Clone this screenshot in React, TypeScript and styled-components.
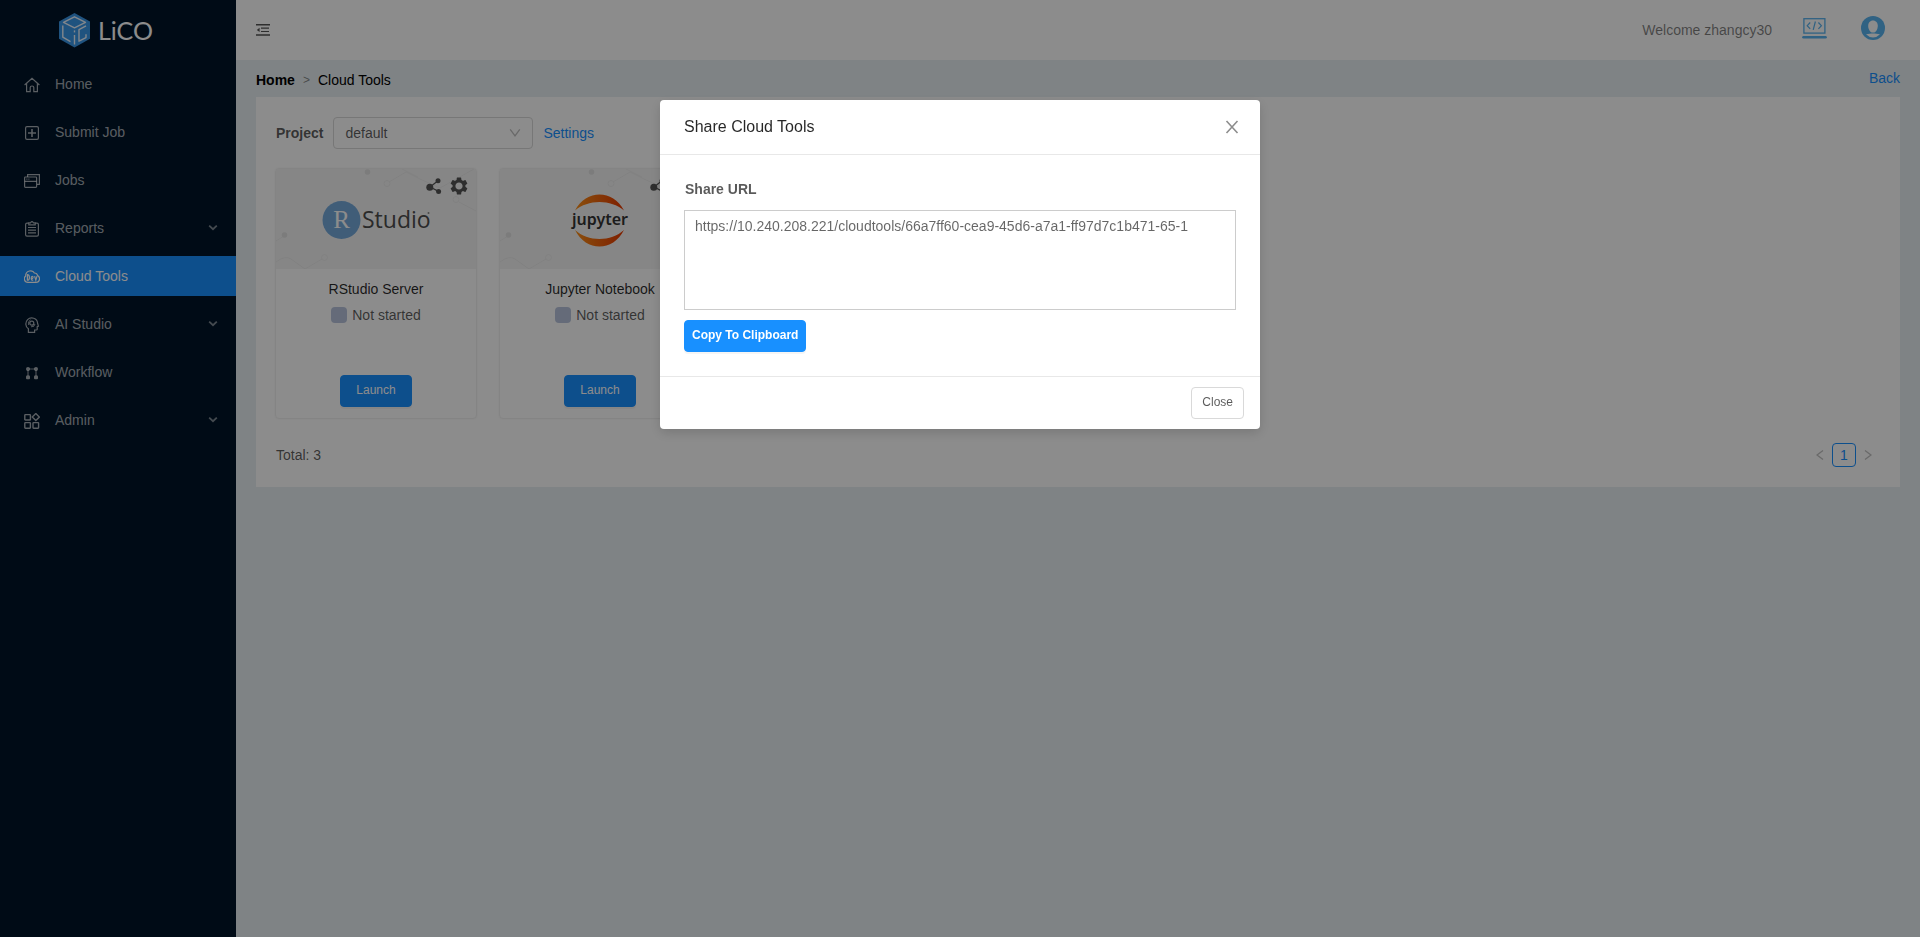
import React from 'react';
import styled, { createGlobalStyle, css } from 'styled-components';

const GlobalStyle = createGlobalStyle`
  * { box-sizing: border-box; }
  html, body { margin: 0; padding: 0; }
  body {
    font-family: Arial, "Liberation Sans", sans-serif;
    font-size: 14px;
    line-height: 22px;
    color: rgba(0, 0, 0, 0.65);
    background: #e7eef2;
  }
  button, input, select, textarea { font-family: inherit; }
  a { color: #1890ff; text-decoration: none; }
`;

const Layout = styled.div`
  display: flex;
  min-height: 100vh;
`;

const Sidebar = styled.aside`
  flex: 0 0 236px;
  background: #001529;
`;

const Brand = styled.a`
  display: flex;
  align-items: center;
  height: 60px;
  padding-left: 58px;
`;

const Menu = styled.nav`
  display: flex;
  flex-direction: column;
  gap: 8px;
  padding: 4px 0;
`;

const MenuItem = styled.a<{ $active?: boolean }>`
  display: flex;
  align-items: center;
  height: 40px;
  padding: 0 18px 0 24px;
  color: ${(p) => (p.$active ? '#fff' : 'rgba(255, 255, 255, 0.65)')};
  background: ${(p) => (p.$active ? '#1890ff' : 'transparent')};
  svg { flex: none; display: block; }
`;

const MenuIcon = styled.span`
  padding-top: 2px;
`;

const MenuLabel = styled.span`
  flex: 1;
  padding-left: 15px;
`;

const Main = styled.div`
  flex: 1;
  min-width: 0;
  display: flex;
  flex-direction: column;
`;

const Header = styled.header`
  display: flex;
  align-items: center;
  justify-content: space-between;
  height: 60px;
  padding: 0 35px 0 20px;
  background: #fff;
`;

const IconButton = styled.button`
  display: flex;
  align-items: center;
  justify-content: center;
  padding: 0;
  border: 0;
  background: none;
  color: inherit;
  cursor: pointer;
`;

const HeaderTools = styled.div`
  display: flex;
  align-items: center;
`;

const Welcome = styled.span`
  color: rgba(0, 0, 0, 0.5);
  margin-right: 30px;
`;

const HeaderIcons = styled.div`
  display: flex;
  gap: 34px;
  padding-bottom: 4px;
`;

const Content = styled.main`
  padding: 0 20px;
`;

const CrumbBar = styled.div`
  display: flex;
  justify-content: space-between;
  height: 37px;
  padding-top: 9px;
`;

const Crumbs = styled.div`
  display: flex;
  gap: 8px;
  color: #000;
  strong { font-weight: 700; }
  span { color: rgba(0, 0, 0, 0.45); font-size: 12px; }
`;

const Back = styled.a`
  line-height: 18px;
`;

const Panel = styled.section`
  background: #fff;
  padding: 20px;
`;

const Toolbar = styled.div`
  display: flex;
  align-items: center;
  gap: 10px;
  height: 32px;
  label { font-weight: 700; }
`;

const SelectWrap = styled.div`
  position: relative;
  width: 200px;
  svg {
    position: absolute;
    right: 12px;
    top: 10px;
    pointer-events: none;
    color: rgba(0, 0, 0, 0.25);
  }
`;

const Select = styled.select`
  appearance: none;
  display: block;
  width: 100%;
  height: 32px;
  padding: 0 11px;
  border: 1px solid #d9d9d9;
  border-radius: 4px;
  background: #fff;
  color: rgba(0, 0, 0, 0.65);
  font-size: 14px;
`;

const Cards = styled.div`
  display: flex;
  flex-wrap: wrap;
  gap: 22px;
  margin: 19px 0 24px -1px;
`;

const Card = styled.article`
  width: 202px;
  height: 251px;
  display: flex;
  flex-direction: column;
  align-items: center;
  border: 1px solid #f0f0f0;
  border-radius: 4px;
  box-shadow: 0 0 2px rgba(0, 0, 0, 0.06);
  overflow: hidden;
`;

const Cover = styled.div`
  position: relative;
  width: 100%;
  height: 100px;
  background: #f5f5f5;
  > svg { display: block; }
`;

const CoverActions = styled.div`
  position: absolute;
  top: 8px;
  right: 8px;
  display: flex;
  gap: 8px;
  color: #555;
`;

const CardTitle = styled.h3`
  margin: 9px 0 4px;
  font-size: 14px;
  font-weight: 400;
  color: rgba(0, 0, 0, 0.85);
`;

const Status = styled.div`
  display: flex;
  align-items: center;
  gap: 5px;
  i {
    width: 16px;
    height: 16px;
    border-radius: 4px;
    background: #b8c4dc;
  }
`;

const Button = styled.button<{ $primary?: boolean; $bold?: boolean; $pad: number }>`
  height: 32px;
  padding: 0 ${(p) => p.$pad}px 2px;
  border: 1px solid #d9d9d9;
  border-radius: 4px;
  background: #fff;
  color: rgba(0, 0, 0, 0.65);
  font-size: 12px;
  font-weight: ${(p) => (p.$bold ? 700 : 400)};
  cursor: pointer;
  ${(p) => p.$primary && css`
    border-color: #1890ff;
    background: #1890ff;
    color: #fff;
    box-shadow: 0 2px 0 rgba(0, 0, 0, 0.04);
  `}
`;

const CardFooter = styled.div`
  margin-top: auto;
  padding-bottom: 11px;
`;

const PanelFooter = styled.div`
  display: flex;
  justify-content: space-between;
  align-items: center;
  height: 24px;
`;

const Pager = styled.nav`
  display: flex;
  align-items: center;
  color: rgba(0, 0, 0, 0.25);
`;

const PageArrow = styled(IconButton)`
  width: 24px;
  height: 24px;
`;

const PageNumber = styled.button`
  width: 24px;
  height: 24px;
  padding: 0;
  border: 1px solid #1890ff;
  border-radius: 4px;
  background: #fff;
  color: #1890ff;
  font-size: 14px;
`;

const Mask = styled.div`
  position: fixed;
  inset: 0;
  display: flex;
  justify-content: center;
  align-items: flex-start;
  padding-top: 100px;
  background: rgba(0, 0, 0, 0.45);
`;

const Dialog = styled.div`
  width: 600px;
  border-radius: 4px;
  background: #fff;
  box-shadow: 0 4px 12px rgba(0, 0, 0, 0.15);
`;

const DialogHeader = styled.div`
  display: flex;
  align-items: center;
  justify-content: space-between;
  height: 55px;
  padding: 0 21px 0 24px;
  border-bottom: 1px solid #e8e8e8;
  color: rgba(0, 0, 0, 0.45);
  h2 {
    margin: 0;
    font-size: 16px;
    font-weight: 400;
    color: rgba(0, 0, 0, 0.85);
  }
`;

const DialogBody = styled.div`
  display: flex;
  flex-direction: column;
  align-items: flex-start;
  padding: 23px 24px 24px;
  label {
    font-weight: 700;
    padding-left: 1px;
    margin-bottom: 10px;
  }
`;

const UrlBox = styled.textarea`
  display: block;
  width: 100%;
  height: 100px;
  margin-bottom: 10px;
  padding: 4px 10px;
  border: 1px solid #ccc;
  border-radius: 0;
  resize: none;
  color: rgba(0, 0, 0, 0.6);
  font-size: 14px;
  line-height: 22px;
`;

const DialogFooter = styled.div`
  display: flex;
  justify-content: flex-end;
  padding: 10px 16px;
  border-top: 1px solid #e8e8e8;
`;

const stroke = { fill: 'none', stroke: 'currentColor', strokeWidth: 1.2 } as const;

const HomeIcon = () => (
  <svg width="16" height="16" viewBox="0 0 16 16" {...stroke}>
    <path d="M.6 8 8 1.4 15.4 8M2.600 6.600v8h3.600V10.400q0-1.400 1.800-1.400t1.800 1.400v4.200h3.600v-8" />
  </svg>
);
const SubmitIcon = () => (
  <svg width="16" height="16" viewBox="0 0 16 16" {...stroke}>
    <rect x="1.600" y="1.600" width="12.800" height="12.800" rx="1.400" />
    <path d="M8 4v8M4 8h8" strokeWidth="1.600" />
  </svg>
);
const JobsIcon = () => (
  <svg width="16" height="16" viewBox="0 0 16 16" {...stroke}>
    <path d="M3.600 4V1.600h11.800v9.800H13" />
    <rect x=".6" y="4" width="12" height="10.400" rx=".8" />
    <path d="M.6 8.400h12M2.400 6.200h1M4.400 6.200h1" />
  </svg>
);
const ReportsIcon = () => (
  <svg width="16" height="16" viewBox="0 0 16 16" {...stroke}>
    <path d="M4.600 2.200H3q-1.400 0-1.400 1.400v10.200q0 1.400 1.400 1.400h10q1.400 0 1.400-1.400V3.600q0-1.400-1.400-1.400h-1.600" />
    <path d="M4.800 3.800V1.800H6.600Q8-.4 9.400 1.800h1.800v2zM4 6.500h8M4 9.200h8M4 11.900h8" />
  </svg>
);
const CloudIcon = () => (
  <svg width="16" height="16" viewBox="0 0 16 16" {...stroke}>
    <path d="M4 13.400C-.4 13.400-.2 8 1.600 7.200 1.600 1 8.800.6 10.400 4c2.600 0 3 1.600 3.200 2.600 3 1.400 2.400 6.800-1.600 6.800z" />
    <path d="M3.400 5.600v5.600q2 0 2-2.800t-2-2.800zM9.200 8.800q0-1.400-1-1.400t-1 1.900 1 1.900h1M7.200 9.300h2M10.600 7.200l1.200 4 1.200-4" />
  </svg>
);
const AiIcon = () => (
  <svg width="16" height="16" viewBox="0 0 16 16" {...stroke}>
    <path d="M4.400 15.400v-3.600C1 9.600 1.200 5 3.600 2.600 6.800-.4 13.400.8 13.600 6.400l.8 2.800-1.200.4v2.600q0 .8-1 .8h-1.600v2.400z" />
    <circle cx="7.800" cy="6.200" r="2" />
    <path d="M4.600 8Q3.800 4 6.600 2.800" strokeWidth=".9" />
    <path d="M7 9.800q3.600.4 4-2.800" strokeWidth=".9" />
  </svg>
);
const WorkflowIcon = () => (
  <svg width="16" height="16" viewBox="0 0 16 16" fill="currentColor">
    <circle cx="4" cy="4" r="2" />
    <circle cx="12" cy="4" r="2" />
    <rect x="2" y="10.400" width="4" height="3.800" rx="1" />
    <rect x="10" y="10.400" width="4" height="3.800" rx="1" />
    <path d="M3.400 5h1.200v6H3.400zM11.400 5h1.200v6h-1.200zM5 3.400h6v1.200H5z" opacity=".8" />
  </svg>
);
const AdminIcon = () => (
  <svg width="16" height="16" viewBox="0 0 16 16" {...stroke} strokeWidth="1.400">
    <rect x=".8" y="1.600" width="5.600" height="5.400" rx=".6" />
    <path d="M11.800.6 15.300 4.100 11.800 7.600 8.300 4.100z" />
    <rect x=".8" y="9.600" width="5.600" height="5.600" rx=".6" />
    <rect x="9" y="9.600" width="5.600" height="5.600" rx=".6" />
  </svg>
);
const MenuArrow = () => (
  <svg width="10" height="8" viewBox="0 0 10 8" fill="none" stroke="currentColor" strokeWidth="1.800" opacity=".75">
    <path d="M1.200 1.600 5 5.200 8.800 1.600" />
  </svg>
);

const Logo = () => (
  <svg width="100" height="38" viewBox="0 0 100 38" role="img" aria-label="LiCO">
    <path d="M16.500 2 32 10.600v17.200L16.500 36.400 1 27.800V10.600z" fill="#3a97e8" />
    <g fill="none" stroke="#fff" strokeOpacity=".9" strokeWidth="1.400" strokeLinejoin="round">
      <path d="M16.500 5.800 27.500 11.300 16.500 16.800 5.500 11.300z" />
      <path d="M4.800 14.400v11.800l7.700 4.400M16.500 24v9.400M28 14.800l-7 3.800v11.600l7-3.600v-3.400" />
      <path d="M16.500 19.400v2" />
    </g>
    <text x="40" y="29" fill="#fff" fontFamily="Lato, sans-serif" fontWeight="400" fontSize="25">LiCO</text>
  </svg>
);

const FoldIcon = () => (
  <svg width="14" height="14" viewBox="0 0 14 14" fill="#555">
    <path d="M0 1h14v1.400H0zM5 4.600h8v1.200H5zM5 7.900h8v1.200H5zM0 11.300h14v1.400H0zM3.600 4.700v4.400L.8 6.900z" />
  </svg>
);
const ConsoleIcon = () => (
  <svg width="25" height="24" viewBox="0 0 25 24" fill="none" stroke="#58b2ee">
    <rect x="1.900" y="2.700" width="21" height="14.400" strokeWidth="1.300" />
    <path d="M1.400 21.300h22.200" strokeWidth="2.400" strokeLinecap="round" />
    <path d="M8.200 6.500 5.200 9.700l3 3.200M16.400 6.500l3 3.200-3 3.200M13.400 5.500l-2.200 8.400" strokeWidth="1.200" />
  </svg>
);
const UserIcon = () => (
  <svg width="24" height="24" viewBox="0 0 24 24">
    <circle cx="12" cy="12" r="12" fill="#58b2ee" />
    <path d="M12 4.600c3 0 4.800 2.400 4.800 5.400s-1.800 6-3.600 6.600h-2.400C9 16 7.200 13 7.200 10S9 4.600 12 4.600z" fill="#fff" />
    <path d="M5 18.200 10.400 17.400h3.200l5.400.8Q16 21.400 12 21.400T5 18.200z" fill="#fff" />
  </svg>
);
const Chevron = () => (
  <svg width="12" height="12" viewBox="0 0 12 12" fill="none" stroke="currentColor" strokeWidth="1.300">
    <path d="M1.200 2.400 6 9l4.800-6.600" />
  </svg>
);
const ShareIcon = () => (
  <svg width="16" height="16" viewBox="0 0 16 16" fill="currentColor">
    <circle cx="3.800" cy="9.200" r="3.500" />
    <circle cx="12" cy="2.700" r="2.500" />
    <circle cx="12.600" cy="13.400" r="2.500" />
    <path d="M4 9 12 2.700M4 9l8.600 4.400" stroke="currentColor" strokeWidth="1.200" />
  </svg>
);
const GearIcon = () => (
  <svg width="18" height="18" viewBox="1.500 1.500 21 21" fill="currentColor">
    <path d="M19.430 12.980c.04-.32.070-.64.070-.98s-.03-.66-.07-.98l2.110-1.650c.19-.15.24-.42.12-.64l-2-3.460c-.12-.22-.39-.3-.61-.22l-2.490 1c-.52-.4-1.080-.73-1.690-.98l-.38-2.650C14.460 2.180 14.250 2 14 2h-4c-.25 0-.46.18-.49.42l-.38 2.650c-.61.25-1.170.59-1.690.98l-2.490-1c-.23-.09-.49 0-.61.22l-2 3.460c-.13.22-.07.49.12.64l2.110 1.650c-.04.32-.07.650-.07.980s.03.66.07.98l-2.110 1.650c-.19.15-.24.42-.12.64l2 3.460c.12.22.39.3.61.22l2.490-1c.52.4 1.080.73 1.690.98l.38 2.650c.03.24.24.42.49.42h4c.25 0 .46-.18.49-.42l.38-2.650c.61-.25 1.170-.59 1.690-.98l2.490 1c.23.09.49 0 .61-.22l2-3.460c.12-.22.07-.49-.12-.64l-2.110-1.650zM12 16.200c-2.300 0-4.200-1.900-4.200-4.200s1.900-4.200 4.200-4.200 4.200 1.900 4.200 4.200-1.900 4.200-4.200 4.200z" />
  </svg>
);
const CloseIcon = () => (
  <svg width="14" height="14" viewBox="0 0 14 14" fill="none" stroke="currentColor" strokeWidth="1.600">
    <path d="M1.500 1 12.500 13M12.500 1 1.500 13" />
  </svg>
);
const ArrowIcon = ({ next }: { next?: boolean }) => (
  <svg width="8" height="12" viewBox="0 0 8 12" fill="none" stroke="currentColor" strokeWidth="1.300">
    <path d={next ? 'M1 1.500 7 6 1 10.500' : 'M7 1.500 1 6l6 4.500'} />
  </svg>
);

const Pattern = () => (
  <g fill="none" stroke="#ebebeb">
    <path d="M0 72l8-5M0 93q9-7 15-3l14 10 17-10M113 13l17-10 14 7 20 9 34-19M126 0l16 8M183 33l17 9" />
    <circle cx="111" cy="14.500" r="3" />
    <circle cx="180" cy="30.500" r="3" />
    <circle cx="48.500" cy="88.500" r="3" />
    <circle cx="8.500" cy="66" r="2.800" fill="#e2e2e2" stroke="none" />
    <circle cx="91.500" cy="3" r="2.800" fill="#e2e2e2" stroke="none" />
  </g>
);

const RStudioArt = () => (
  <svg width="200" height="100" viewBox="0 0 200 100" role="img" aria-label="RStudio">
    <Pattern />
    <circle cx="65.500" cy="51" r="19" fill="#75aadb" />
    <text x="65.500" y="59" textAnchor="middle" fill="#fff" fontFamily="'Liberation Serif', serif" fontSize="25">R</text>
    <text x="86" y="59" fill="#4d4d4d" fontFamily="'Open Sans', sans-serif" fontSize="23">Studio</text>
    <circle cx="152.500" cy="44" r="1" fill="#888" />
  </svg>
);

const JupyterArt = () => (
  <svg width="200" height="100" viewBox="0 0 200 100" role="img" aria-label="Jupyter">
    <defs>
      <linearGradient id="flame" x1="0" x2="1">
        <stop offset="0" stopColor="#fa9018" />
        <stop offset="1" stopColor="#e83800" />
      </linearGradient>
    </defs>
    <Pattern />
    <path d="M75 41.500C86 20 113 20 124 41.500 111 30 88 30 75 41.500z" fill="url(#flame)" />
    <path d="M75 61C86 83 113 83 124 61 111 73 88 73 75 61z" fill="url(#flame)" />
    <text x="100" y="56" textAnchor="middle" fill="#333" fontFamily="'Noto Sans', sans-serif" fontWeight="600" fontSize="16">jupyter</text>
  </svg>
);

const menu = [
  { label: 'Home', Icon: HomeIcon },
  { label: 'Submit Job', Icon: SubmitIcon },
  { label: 'Jobs', Icon: JobsIcon },
  { label: 'Reports', Icon: ReportsIcon, sub: true },
  { label: 'Cloud Tools', Icon: CloudIcon, active: true },
  { label: 'AI Studio', Icon: AiIcon, sub: true },
  { label: 'Workflow', Icon: WorkflowIcon },
  { label: 'Admin', Icon: AdminIcon, sub: true },
];

const tools = [
  { name: 'RStudio Server', Art: RStudioArt },
  { name: 'Jupyter Notebook', Art: JupyterArt },
];

export default function App() {
  return (
    <>
      <GlobalStyle />
      <Layout>
        <Sidebar>
          <Brand href="#"><Logo /></Brand>
          <Menu>
            {menu.map(({ label, Icon, sub, active }) => (
              <MenuItem key={label} href="#" $active={active}>
                <MenuIcon><Icon /></MenuIcon>
                <MenuLabel>{label}</MenuLabel>
                {sub && <MenuArrow />}
              </MenuItem>
            ))}
          </Menu>
        </Sidebar>
        <Main>
          <Header>
            <IconButton aria-label="Collapse menu"><FoldIcon /></IconButton>
            <HeaderTools>
              <Welcome>Welcome zhangcy30</Welcome>
              <HeaderIcons>
                <IconButton aria-label="Console"><ConsoleIcon /></IconButton>
                <IconButton aria-label="Account"><UserIcon /></IconButton>
              </HeaderIcons>
            </HeaderTools>
          </Header>
          <Content>
            <CrumbBar>
              <Crumbs><strong>Home</strong><span>&gt;</span>Cloud Tools</Crumbs>
              <Back href="#">Back</Back>
            </CrumbBar>
            <Panel>
              <Toolbar>
                <label htmlFor="project">Project</label>
                <SelectWrap>
                  <Select id="project" defaultValue="default"><option>default</option></Select>
                  <Chevron />
                </SelectWrap>
                <a href="#">Settings</a>
              </Toolbar>
              <Cards>
                {tools.map(({ name, Art }) => (
                  <Card key={name}>
                    <Cover>
                      <Art />
                      <CoverActions>
                        <IconButton aria-label="Share"><ShareIcon /></IconButton>
                        <IconButton aria-label="Configure"><GearIcon /></IconButton>
                      </CoverActions>
                    </Cover>
                    <CardTitle>{name}</CardTitle>
                    <Status><i />Not started</Status>
                    <CardFooter><Button $primary $pad={15}>Launch</Button></CardFooter>
                  </Card>
                ))}
              </Cards>
              <PanelFooter>
                <span>Total: 3</span>
                <Pager>
                  <PageArrow aria-label="Previous page"><ArrowIcon /></PageArrow>
                  <PageNumber>1</PageNumber>
                  <PageArrow aria-label="Next page"><ArrowIcon next /></PageArrow>
                </Pager>
              </PanelFooter>
            </Panel>
          </Content>
        </Main>
      </Layout>
      <Mask>
        <Dialog role="dialog" aria-modal="true" aria-labelledby="share-title">
          <DialogHeader>
            <h2 id="share-title">Share Cloud Tools</h2>
            <IconButton aria-label="Close dialog"><CloseIcon /></IconButton>
          </DialogHeader>
          <DialogBody>
            <label htmlFor="share-url">Share URL</label>
            <UrlBox
              id="share-url"
              readOnly
              value="https://10.240.208.221/cloudtools/66a7ff60-cea9-45d6-a7a1-ff97d7c1b471-65-1"
            />
            <Button $primary $bold $pad={7}>Copy To Clipboard</Button>
          </DialogBody>
          <DialogFooter><Button $pad={10}>Close</Button></DialogFooter>
        </Dialog>
      </Mask>
    </>
  );
}
